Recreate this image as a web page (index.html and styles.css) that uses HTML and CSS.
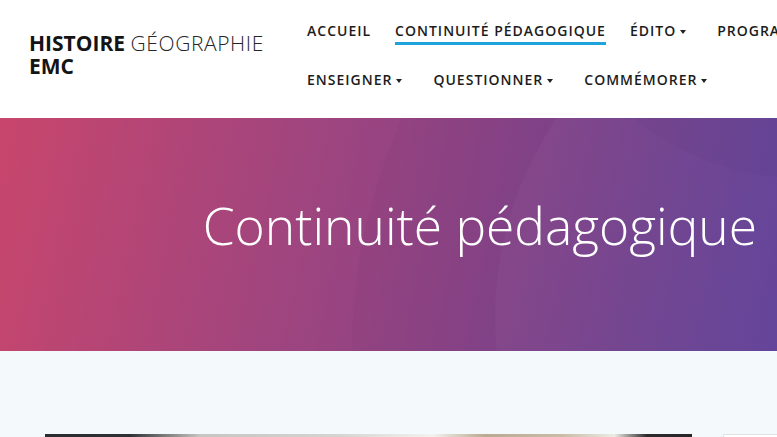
FILE: index.html
```html
<!DOCTYPE html>
<html lang="fr">
<head>
<meta charset="utf-8">
<title>Continuité pédagogique – Histoire Géographie EMC</title>
<link rel="stylesheet" href="styles.css">
</head>
<body>
<header class="site-header">
  <div class="brand">
    <a class="brand-link" href="#"><strong>HISTOIRE</strong> <span class="light">GÉOGRAPHIE</span><br><strong>EMC</strong></a>
  </div>
  <nav class="main-nav">
    <ul class="nav-row">
      <li class="nav-item"><a href="#"><span class="nav-text">ACCUEIL</span></a></li>
      <li class="nav-item active"><a href="#"><span class="nav-text">CONTINUITÉ PÉDAGOGIQUE</span></a></li>
      <li class="nav-item"><a href="#"><span class="nav-text">ÉDITO</span><span class="caret"></span></a></li>
      <li class="nav-item"><a href="#"><span class="nav-text">PROGRAMMES</span><span class="caret"></span></a></li>
    </ul>
    <ul class="nav-row">
      <li class="nav-item"><a href="#"><span class="nav-text">ENSEIGNER</span><span class="caret"></span></a></li>
      <li class="nav-item"><a href="#"><span class="nav-text">QUESTIONNER</span><span class="caret"></span></a></li>
      <li class="nav-item"><a href="#"><span class="nav-text">COMMÉMORER</span><span class="caret"></span></a></li>
    </ul>
  </nav>
</header>

<section class="hero">
  <span class="orb orb-a"></span>
  <span class="orb orb-b"></span>
  <span class="orb orb-c"></span>
  <h1 class="hero-title">Continuité pédagogique</h1>
</section>

<main class="content">
  <div class="content-grid">
    <article class="main-card">
      <div class="card-image"></div>
    </article>
    <aside class="side-card"></aside>
  </div>
</main>
</body>
</html>
```

FILE: styles.css
```css
* { box-sizing: border-box; }

html, body {
  margin: 0;
  padding: 0;
}

body {
  width: 777px;
  height: 437px;
  overflow: hidden;
  font-family: "Open Sans", "Liberation Sans", sans-serif;
  background: #f4f9fc;
  color: #1b1b1b;
}

a { color: inherit; text-decoration: none; }

/* Header */
.site-header {
  height: 118px;
  background: #ffffff;
  display: grid;
  grid-template-columns: 295px 1fr;
  overflow: hidden;
}

.brand {
  padding: 32px 0 0 29px;
}

.brand-link {
  display: block;
  font-size: 21px;
  line-height: 23px;
  color: #141414;
  white-space: nowrap;
}

.brand-link strong { font-weight: 700; }
.brand-link .light { font-weight: 300; color: #262626; letter-spacing: 0.6px; }

.main-nav {
  padding-top: 21px;
  overflow: hidden;
}

.nav-row {
  list-style: none;
  margin: 0;
  padding: 0;
  display: flex;
  flex-wrap: nowrap;
  white-space: nowrap;
}

.nav-item {
  padding: 0 12px 25px;
  flex: none;
}

.nav-item a {
  display: flex;
  align-items: flex-start;
  font-size: 14px;
  font-weight: 600;
  letter-spacing: 1px;
  color: #1c1c1c;
}

.nav-text {
  display: inline-block;
  line-height: 20px;
  padding-bottom: 1px;
  border-bottom: 3px solid transparent;
}

.nav-item.active .nav-text {
  border-bottom-color: #1ea3dd;
}

.caret {
  display: inline-block;
  width: 0;
  height: 0;
  margin: 9px 7px 0 4px;
  border-top: 4px solid #222;
  border-left: 3.5px solid transparent;
  border-right: 3.5px solid transparent;
}

/* Hero */
.hero {
  position: relative;
  height: 233px;
  overflow: hidden;
  padding: 77px 20px 0 0;
  background: linear-gradient(102deg, #c8466c 0%, #a8457b 30%, #8f4485 55%, #76438f 78%, #62419b 100%);
}

.orb {
  position: absolute;
  border-radius: 50%;
  pointer-events: none;
}

.orb-a {
  left: 352px;
  top: -320px;
  width: 1100px;
  height: 1100px;
  background: rgba(0, 0, 0, 0.02);
}

.orb-b {
  left: 495px;
  top: -155px;
  width: 710px;
  height: 710px;
  background: rgba(255, 255, 255, 0.03);
}

.orb-c {
  left: 540px;
  top: -460px;
  width: 520px;
  height: 520px;
  background: rgba(0, 0, 0, 0.02);
}

.hero-title {
  position: relative;
  margin: 0;
  text-align: right;
  font-family: "Open Sans", "Liberation Sans", sans-serif;
  font-weight: 300;
  font-size: 51.5px;
  line-height: 60px;
  color: #ffffff;
  white-space: nowrap;
}

/* Content */
.content {
  background: #f4f9fc;
  padding-top: 83px;
}

.content-grid {
  display: grid;
  grid-template-columns: 647px 1fr;
  column-gap: 31px;
  padding-left: 45px;
}

.main-card {
  height: 40px;
}

.card-image {
  height: 40px;
  background: linear-gradient(90deg, #2a2c2e 0%, #2e3032 13%, #c6c7c3 24%, #d4d4d0 45%, #f3f2ee 60%, #b9aa92 68%, #c9bda8 80%, #ecebe4 88%, #2c2c2c 93%, #262626 100%);
}

.side-card {
  height: 40px;
  background: #ffffff;
  border-top: 1px solid #dfe3e6;
  border-left: 1px solid #dfe3e6;
}
```
